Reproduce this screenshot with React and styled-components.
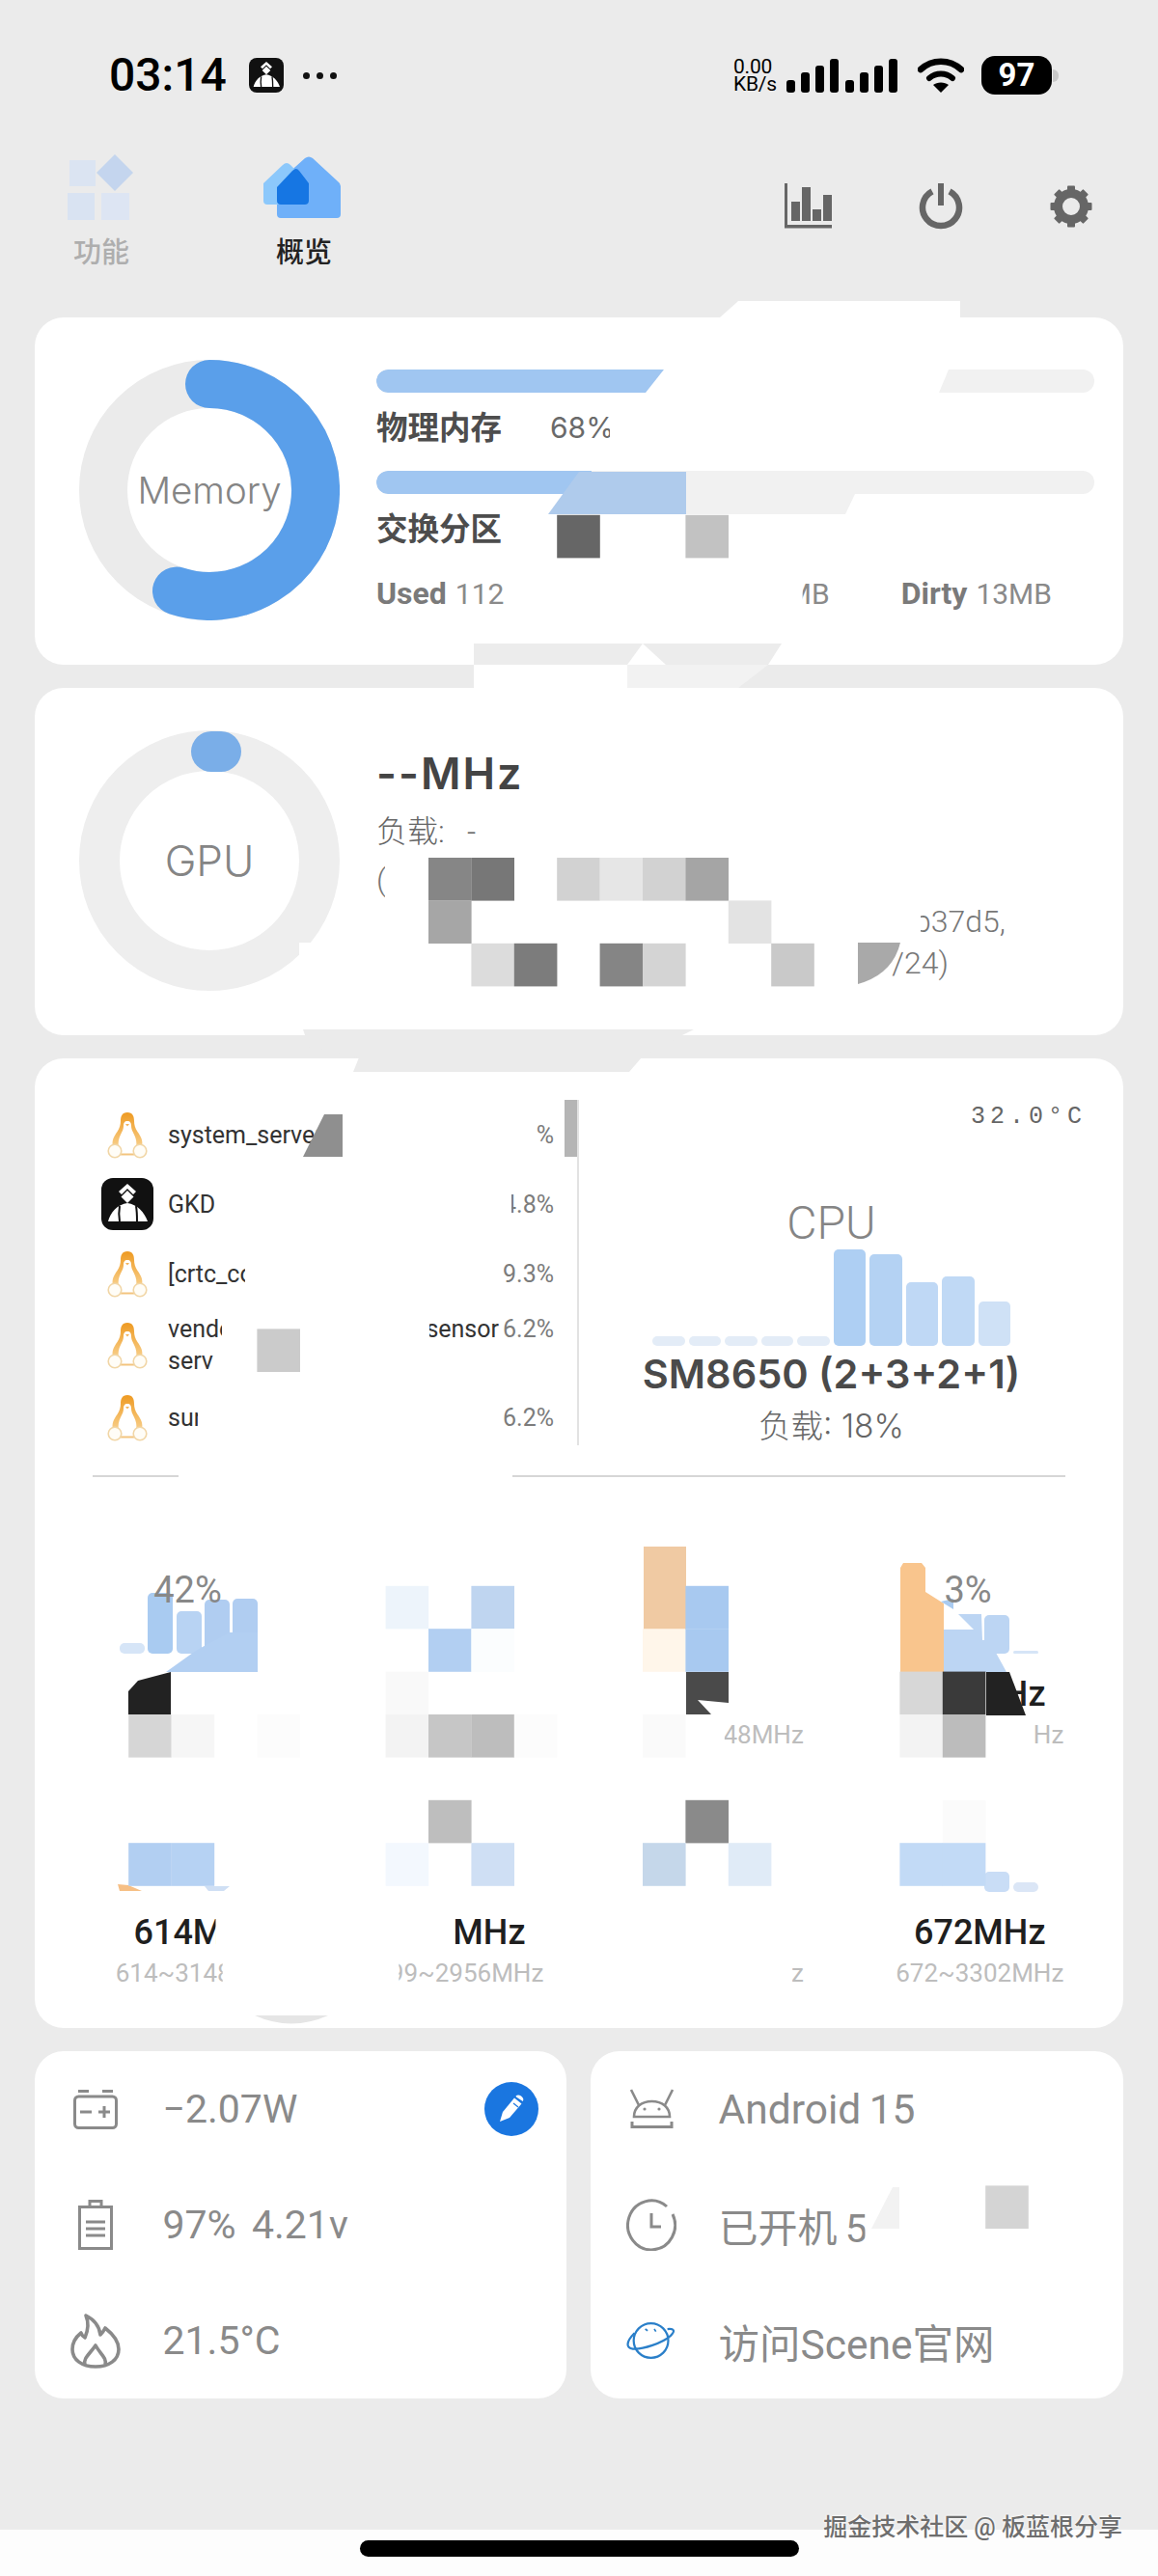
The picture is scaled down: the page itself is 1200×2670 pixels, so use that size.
import React from 'react';
import styled, { createGlobalStyle } from 'styled-components';

const Global = createGlobalStyle`
  html, body { margin: 0; padding: 0; background: #ebebeb; }
  * { box-sizing: border-box; }
  body { font-family: Roboto, "Noto Sans CJK SC", sans-serif; }
`;

const clip = (p) =>
  p.$keepLeft
    ? `clip-path: inset(-6px calc(100% - ${p.$keepLeft}px) -6px -2px);`
    : p.$keepRight
    ? `clip-path: inset(-6px -2px -6px calc(100% - ${p.$keepRight}px));`
    : '';

const Page = styled.div`
  position: relative;
  width: 1200px;
  height: 2670px;
  background: #ebebeb;
  display: flex;
  flex-direction: column;
  overflow: hidden;
`;

/* status bar */
const StatusBar = styled.div`
  height: 100px;
  padding: 56px 110px 0 113px;
  display: flex;
  align-items: center;
`;
const Clock = styled.div`
  font-size: 48px;
  line-height: 44px;
  font-weight: 500;
  color: #000;
  width: 145px;
`;
const MoreDots = styled.div`
  display: flex;
  gap: 7px;
  margin-left: 20px;
  & > i { width: 7px; height: 7px; border-radius: 50%; background: #111; display: block; }
`;
const StatusRight = styled.div`
  margin-left: auto;
  display: flex;
  align-items: center;
`;
const NetSpeed = styled.div`
  width: 55px;
  font-size: 21px;
  line-height: 18px;
  color: #000;
  letter-spacing: -0.2px;
`;
const BatteryPill = styled.div`
  position: relative;
  width: 73px;
  height: 40px;
  margin-left: 18px;
  border-radius: 14px;
  background: #000;
  color: #fff;
  font-size: 33px;
  font-weight: 700;
  line-height: 40px;
  text-align: center;
  &::after {
    content: '';
    position: absolute;
    right: -7px;
    top: 14px;
    width: 6px;
    height: 13px;
    border-radius: 0 6px 6px 0;
    background: #c8c8c8;
  }
`;

/* top tabs */
const TopBar = styled.div`
  display: flex;
  padding: 60px 68px 47px 55px;
  height: 229px;
`;
const Tab = styled.div`
  width: 100px;
  margin-right: 110px;
  display: flex;
  flex-direction: column;
  align-items: center;
`;
const TabLabel = styled.div`
  margin-top: 12px;
  font-size: 29px;
  line-height: 40px;
  font-weight: 500;
  color: ${(p) => (p.$active ? '#222' : '#aeaeae')};
`;
const Actions = styled.div`
  margin-left: auto;
  margin-top: 30px;
  display: flex;
  gap: 90px;
  align-items: flex-start;
`;

/* cards */
const Stack = styled.div`
  padding: 0 36px;
  display: flex;
  flex-direction: column;
  gap: 24px;
`;
const Card = styled.div`
  background: #fff;
  border-radius: 30px;
  height: ${(p) => p.$h}px;
`;
const GaugeCard = styled(Card)`
  display: flex;
  padding: 44px 30px 0 46px;
  gap: 38px;
`;
const Gauge = styled.div`
  position: relative;
  width: 270px;
  height: 270px;
  flex: none;
  display: flex;
  align-items: center;
  justify-content: center;
`;
const GaugeSvg = styled.svg`
  position: absolute;
  inset: 0;
`;
const GaugeLabel = styled.div`
  position: relative;
  font-family: Inter, sans-serif;
  font-size: ${(p) => p.$size}px;
  font-weight: 300;
  color: #858585;
`;
const Info = styled.div`
  flex: 1;
  padding-top: ${(p) => p.$top}px;
`;
const Track = styled.div`
  height: 24px;
  width: 744px;
  border-radius: 12px;
  background: #f1f1f1;
  overflow: hidden;
  margin-top: ${(p) => p.$mt || 0}px;
`;
const Fill = styled.div`
  height: 100%;
  background: #a0c6f1;
  border-radius: 12px 0 0 12px;
`;
const MemRow = styled.div`
  margin-top: 12px;
  height: 48px;
  display: flex;
  align-items: center;
  gap: 50px;
`;
const MemName = styled.div`
  font-size: 32.5px;
  font-weight: 700;
  color: #4d4d4d;
  margin-top: -6px;
`;
const MemPct = styled.div`
  display: inline-block;
  font-family: Inter, sans-serif;
  font-size: 30px;
  font-weight: 400;
  color: #6a6a6a;
  ${clip}
`;
const StatLine = styled.div`
  margin-top: 23px;
  width: 700px;
  height: 40px;
  display: flex;
  align-items: center;
  font-size: 30px;
  color: #8a8a8a;
`;
const Stat = styled.span`
  display: inline-block;
  white-space: nowrap;
  ${clip}
  & > b { font-size: 32px; font-weight: 700; color: #7a7a7a; margin-right: 9px; }
`;
const MidStat = styled.div`
  flex: 1;
  text-align: right;
  padding-right: 74px;
`;
const GpuTitle = styled.div`
  font-family: Inter, sans-serif;
  font-size: 45px;
  letter-spacing: 2px;
  line-height: 60px;
  font-weight: 600;
  color: #444;
`;
const GpuLoad = styled.div`
  margin-top: 8px;
  font-size: 32px;
  line-height: 44px;
  font-weight: 300;
  color: #666;
  white-space: pre;
`;
const GpuDesc = styled.div`
  margin-top: 7px;
  font-size: 32px;
  font-weight: 300;
  color: #777;
`;
const DescLine = styled.div`
  width: ${(p) => p.$w}px;
  height: 43px;
  line-height: 42px;
  text-align: right;
  overflow: hidden;
  white-space: nowrap;
`;
const DescFrag = styled.span`
  display: inline-block;
  ${clip}
`;

/* CPU card */
const CpuTop = styled.div`
  display: flex;
  padding: 43px 0 0 69px;
  height: 401px;
`;
const ProcList = styled.div`
  position: relative;
  width: 495px;
  height: 358px;
  padding-right: 26px;
  flex: none;
  &::before {
    content: '';
    position: absolute;
    left: 480px;
    top: 0;
    width: 13px;
    height: 59px;
    background: #b5b5b5;
  }
  &::after {
    content: '';
    position: absolute;
    left: 493px;
    top: 0;
    width: 2px;
    height: 358px;
    background: #e2e2e2;
  }
`;
const ProcRow = styled.div`
  height: ${(p) => p.$h}px;
  display: flex;
  align-items: center;
  width: 469px;
`;
const ProcIcon = styled.div`
  width: 54px;
  flex: none;
  margin-right: 15px;
  display: flex;
  justify-content: center;
`;
const ProcBody = styled.div`
  flex: 1;
  display: flex;
  flex-direction: column;
  gap: 1px;
`;
const ProcLine = styled.div`
  display: flex;
  align-items: center;
  height: 32px;
  font-size: 25px;
  white-space: nowrap;
`;
const ProcName = styled.span`
  display: inline-block;
  color: #333;
  ${clip}
`;
const ProcSpacer = styled.span`
  flex: 1;
`;
const ProcPct = styled.span`
  display: inline-block;
  color: #7c7c7c;
  margin-left: 4px;
  ${clip}
`;
const CpuPanel = styled.div`
  flex: 1;
  padding-right: 42px;
  padding-left: 1px;
  display: flex;
  flex-direction: column;
  align-items: center;
`;
const CpuTemp = styled.div`
  align-self: flex-end;
  font-family: "Liberation Mono", monospace;
  font-size: 25px;
  line-height: 36px;
  letter-spacing: 5px;
  margin-right: -4px;
  color: #666;
`;
const CpuLabel = styled.div`
  margin-top: 62px;
  font-size: 48px;
  line-height: 60px;
  font-weight: 300;
  color: #858585;
`;
const CpuBars = styled.div`
  margin-top: -3px;
  height: 100px;
  display: flex;
  align-items: flex-end;
  gap: 4px;
`;
const Bar = styled.div`
  width: ${(p) => p.$w}px;
  height: ${(p) => p.$h}px;
  background: ${(p) => p.$c};
  border-radius: 5px;
  flex: none;
`;
const Soc = styled.div`
  margin-top: 4px;
  font-family: Inter, "Noto Sans CJK SC", sans-serif;
  font-size: 41.5px;
  line-height: 50px;
  font-weight: 600;
  color: #4a4a4a;
  white-space: nowrap;
`;
const CpuLoad = styled.div`
  margin-top: 7px;
  font-family: Inter, "Noto Sans CJK SC", sans-serif;
  font-size: 33.5px;
  line-height: 44px;
  font-weight: 300;
  color: #666;
`;
const HRule = styled.div`
  height: 2px;
  margin: 31px 60px 0;
  background: #d6d6d6;
`;
const CoreGrid = styled.div`
  margin-top: 92px;
  padding: 0 14px 0 36px;
  display: grid;
  grid-template-columns: repeat(4, 269.5px);
  row-gap: 52px;
`;
const Core = styled.div`
  height: 195px;
  display: flex;
  flex-direction: column;
`;
const CorePct = styled.div`
  height: 50px;
  line-height: 50px;
  padding-right: 24.5px;
  text-align: center;
  font-size: 38px;
  color: #888;
  position: relative;
  z-index: 1;
`;
const CoreBars = styled.div`
  margin-top: -22px;
  height: 63px;
  padding-left: 52px;
  display: flex;
  align-items: flex-end;
  gap: 3.3px;
`;
const CoreFreq = styled.div`
  margin-top: 22px;
  height: 40px;
  line-height: 40px;
  text-align: center;
  font-size: 36px;
  font-weight: 500;
  color: #1f1f1f;
`;
const FreqText = styled.span`
  display: inline-block;
  ${clip}
`;
const CoreRange = styled.div`
  margin-top: 2px;
  height: 40px;
  line-height: 40px;
  text-align: center;
  font-size: 26px;
  color: #bdbdbd;
`;

/* bottom cards */
const BottomGrid = styled.div`
  display: grid;
  grid-template-columns: 551px 552px;
  gap: 25px;
`;
const InfoCard = styled(Card)`
  display: flex;
  flex-direction: column;
  justify-content: center;
`;
const InfoRow = styled.div`
  height: 120px;
  display: flex;
  align-items: center;
  padding-left: 37px;
`;
const InfoIcon = styled.div`
  width: 52px;
  flex: none;
  display: flex;
  justify-content: center;
  margin-right: 43.5px;
`;
const InfoText = styled.div`
  font-size: ${(p) => p.$size || 41}px;
  color: #8a8a8a;
  white-space: pre;
  word-spacing: -2px;
  ${clip}
`;
const EditButton = styled.div`
  margin-left: auto;
  margin-right: 29px;
  width: 56px;
  height: 56px;
  border-radius: 50%;
  background: #1a76e0;
  display: flex;
  align-items: center;
  justify-content: center;
`;

/* home bar + overlays */
const HomeBar = styled.div`
  margin-top: auto;
  height: 48px;
  background: #fdfdfd;
  display: flex;
  justify-content: center;
  padding-top: 11px;
`;
const HomePill = styled.div`
  width: 455px;
  height: 17px;
  border-radius: 9px;
  background: #000;
`;
const Watermark = styled.div`
  position: absolute;
  right: 37px;
  top: 2603px;
  font-size: 25px;
  line-height: 34px;
  font-weight: 500;
  color: #6e6e6e;
  text-shadow: 0 0 3px #fff, 0 0 2px #fff;
  white-space: nowrap;
`;
const RedactionLayer = styled.svg`
  position: absolute;
  left: 0;
  top: 0;
  pointer-events: none;
`;

/* icons */
const GkdGlyph = ({ size }) => (
  <svg width={size} height={size} viewBox="0 0 54 54">
    <rect width="54" height="54" rx="12" fill="#111" />
    <path d="M18 14 L27 6 L36 14 L33 17 L27 11 L21 17 Z" fill="#fff" />
    <path d="M27 13 L33.5 19.5 L27 26 L20.5 19.5 Z" fill="#fff" />
    <path d="M7 45 C9 36 17 27 27 26 C37 27 45 36 48 45 Z" fill="#fff" />
    <path d="M19 29 C18 35 18 40 19 45 M36 29 C37 35 37 40 37 45" stroke="#111" strokeWidth="2" fill="none" />
  </svg>
);
const Penguin = () => (
  <svg width="42" height="49" viewBox="0 0 42 49">
    <defs>
      <linearGradient id="tux" x1="0" y1="0" x2="0" y2="1">
        <stop offset="0" stopColor="#ee9a22" />
        <stop offset="1" stopColor="#f8cf8a" />
      </linearGradient>
    </defs>
    <path d="M21 1 C15.5 1 14 5 14 10 C14 14 13 17 10.5 21 C7 26 4.5 30 6 37 L36 37 C37.5 30 35 26 31.5 21 C29 17 28 14 28 10 C28 5 26.5 1 21 1Z" fill="url(#tux)" />
    <path d="M21 10 C24 10 25 12 25 15 C25 18 26 20 28 24 C30 28 31 32 30 37 L12 37 C11 32 12 28 14 24 C16 20 17 18 17 15 C17 12 18 10 21 10Z" fill="#fff" />
    <path d="M19 13 H23 L21 15.5Z" fill="#f2b257" />
    <path d="M14 44.5 H28" stroke="#f3c47e" strokeWidth="2" />
    <circle cx="8" cy="41" r="6.8" fill="#fffdf7" stroke="#f1d6a6" strokeWidth="1.6" />
    <circle cx="34" cy="41" r="6.8" fill="#fffdf7" stroke="#f1d6a6" strokeWidth="1.6" />
  </svg>
);
const Signal = () => {
  const hs = [13, 21, 28, 35];
  const xs = [0, 15, 30, 45, 61, 76, 91, 106];
  return (
    <svg width="115" height="36" viewBox="0 0 115 36">
      {xs.map((x, i) => {
        const h = hs[i % 4];
        return <rect key={x} x={x} y={36 - h} width="9" height={h} rx="3" fill="#000" />;
      })}
    </svg>
  );
};
const Wifi = () => (
  <svg width="48" height="36" viewBox="0 0 48 36" style={{ marginLeft: 21 }}>
    <path d="M3 12 C15 1 33 1 45 12" fill="none" stroke="#000" strokeWidth="6.5" strokeLinecap="round" />
    <path d="M12 21 C19 15 29 15 36 21" fill="none" stroke="#000" strokeWidth="6" strokeLinecap="round" />
    <path d="M24 36 L16 28 C20 24.5 28 24.5 32 28Z" fill="#000" />
  </svg>
);
const GridTabIcon = () => (
  <svg width="72" height="70" viewBox="0 0 72 70">
    <rect x="3" y="6" width="27" height="27" fill="#dbe4f2" />
    <rect x="1" y="40" width="28" height="28" fill="#d9e3f2" />
    <rect x="36" y="40" width="29" height="28" fill="#dde5f3" />
    <path d="M50 0 L69 19 L50 38 L31 19 Z" fill="#c4d5ee" />
  </svg>
);
const HomeTabIcon = () => (
  <svg width="90" height="70" viewBox="0 0 90 70">
    <path d="M17 62 Q17 66 21 66 H79 Q83 66 83 62 V33 Q83 30 80 28 L54 4 Q50 1 46 4 L17 30Z" fill="#6fb0f9" />
    <path d="M3 48 Q3 52 7 52 H46 Q50 52 50 48 V30 L31 11 Q27 7 23 11 L3 30Z" fill="#8cc8fb" />
    <path d="M17 48 Q17 52 21 52 H46 Q50 52 50 48 V30 L40 17 Q37 13 33 17 L17 34Z" fill="#1676e3" />
  </svg>
);
const ChartIcon = () => (
  <svg width="49" height="47" viewBox="0 0 49 47" fill="#666">
    <rect x="0" y="0" width="3" height="46" />
    <rect x="0" y="43" width="49" height="3.5" />
    <rect x="7" y="19" width="9" height="20" />
    <rect x="18" y="4" width="9" height="35" />
    <rect x="29" y="27" width="9" height="12" />
    <rect x="40" y="12" width="9" height="27" />
  </svg>
);
const PowerIcon = () => (
  <svg width="46" height="48" viewBox="0 0 46 48" fill="none" stroke="#666">
    <path d="M14 8.3 A19 19 0 1 0 32 8.3" strokeWidth="6.5" />
    <path d="M23 0 V23" strokeWidth="6" />
  </svg>
);
const GearIcon = () => {
  const angles = [0, 45, 90, 135, 180, 225, 270, 315];
  return (
    <svg width="44" height="44" viewBox="0 0 44 44" style={{ marginTop: 2 }}>
      <circle cx="22" cy="22" r="13.5" fill="none" stroke="#666" strokeWidth="9" />
      {angles.map((a) => (
        <rect key={a} x="18" y="0.5" width="8" height="8" rx="1" fill="#666" transform={`rotate(${a} 22 22)`} />
      ))}
    </svg>
  );
};
const CarBattery = () => (
  <svg width="46" height="41" viewBox="0 0 46 41" fill="none" stroke="#8a8a8a" strokeWidth="3">
    <path d="M5 1.5 H16 M30 1.5 H41" />
    <rect x="1.5" y="7" width="43" height="32.5" rx="4" />
    <path d="M7 23 H19 M26 23 H38 M32 17 V29" />
  </svg>
);
const TallBattery = () => (
  <svg width="36" height="52" viewBox="0 0 36 52" fill="none" stroke="#8a8a8a" strokeWidth="3">
    <path d="M12 7 V1.5 H24 V7" />
    <rect x="1.5" y="7.5" width="33" height="43" />
    <path d="M8 23 H28 M8 30 H28 M8 37 H28" />
  </svg>
);
const Flame = () => (
  <svg width="52" height="57" viewBox="0 0 52 57" fill="none" stroke="#8a8a8a" strokeWidth="3.6" strokeLinejoin="round">
    <path d="M16 2 C24 6 30 13 31 22 C33 20 35 17 36 15 C45 22 50 29 50 37 C50 48 40 55 26 55 C12 55 2 48 2 37 C2 30 6 24 11 20 C12 23 13 24 15 25 C18 18 19 9 16 2Z" />
    <path d="M15 53 C13 46 20 42 26 33 C31 42 38 46 36 53" />
  </svg>
);
const AndroidIcon = () => (
  <svg width="47" height="42" viewBox="0 0 47 42" fill="none" stroke="#8a8a8a" strokeWidth="2.6">
    <path d="M2 1 L10 17 M45 1 L37 17" />
    <path d="M5 29 C5 19 13 13 23.5 13 C34 13 42 19 42 29 Z" />
    <circle cx="16" cy="21" r="1.6" fill="#8a8a8a" stroke="none" />
    <circle cx="31" cy="21" r="1.6" fill="#8a8a8a" stroke="none" />
    <path d="M3 34 V39.5 H44 V34" strokeWidth="3" />
  </svg>
);
const ClockIcon = () => (
  <svg width="52" height="54" viewBox="0 0 52 54" fill="none" stroke="#8a8a8a" strokeWidth="3">
    <path d="M42 8 A24.5 25.5 0 1 0 48 16" />
    <path d="M26 15 V29 H36" />
  </svg>
);
const PlanetIcon = () => (
  <svg width="61" height="46" viewBox="0 0 61 46" fill="none" stroke="#2a7fc9" strokeWidth="2.6">
    <circle cx="30" cy="23" r="21" />
    <path d="M10 14 C0 24 -1 32 8 33 C20 34 44 26 54 17 C60 11 58 8 50 9" />
    <path d="M23 9 L26 11 M34 9 L36 12" strokeWidth="2" />
  </svg>
);
const PencilGlyph = () => (
  <svg width="36" height="36" viewBox="0 0 36 36">
    <path d="M6 31 L9 21 L21 6.5 L28.5 12.5 L16 27Z" fill="#fff" />
    <path d="M22.5 4.5 C24 3 26 3 28 4.5 C30 6 31 8 29.8 10 L23 5.5Z" fill="#fff" />
    <path d="M20 12 L25 16" stroke="#1a76e0" strokeWidth="1.2" />
  </svg>
);

/* data */
const procs = [
  { name: 'system_server', keep: 157, pct: '12.4%', keepPct: 18, h: 72 },
  { name: 'GKD', pct: '4.8%', keepPct: 44, h: 72, gkd: true },
  { name: '[crtc_commit]', keep: 80, pct: '9.3%', h: 72 },
  { h: 76, vendor: true },
  { name: 'surfaceflinger', keep: 31, pct: '6.2%', h: 74 },
];
const cpuBars = [
  [10, '#e3ecf7'], [10, '#e3ecf7'], [10, '#e3ecf7'], [10, '#e3ecf7'], [10, '#e3ecf7'],
  [100, '#aecff3'], [95, '#b4d2f3'], [66, '#bfd8f5'], [72, '#c0d9f5'], [46, '#cfe1f6'],
];
const cores = [
  { pct: '42%', bars: [[11, '#d6e5f7'], [63, '#a9cbf1'], [44, '#b8d3f3'], [56, '#b0cdf1'], [57, '#b0cdf1']] },
  {},
  { range: '499~3148MHz', keepRangeR: 82 },
  {
    pct: '3%',
    bars: [[0, 'none'], [0, 'none'], [0, 'none'], [40, '#bcd5f3'], [3, '#d6e5f7']],
    freq: '998MHz', keepFreqR: 33, range: '672~3302MHz', keepRangeR: 32,
  },
  { freq: '614MHz', keepFreqL: 85, range: '614~3148MHz', keepRangeL: 111 },
  { freq: '499MHz', keepFreqR: 73, range: '499~2956MHz', keepRangeR: 150 },
  { range: '499~3148MHz', keepRangeR: 12 },
  {
    bars: [[0, 'none'], [0, 'none'], [0, 'none'], [21, '#c9ddf6'], [10, '#dbe6f6']],
    freq: '672MHz', range: '672~3302MHz',
  },
];

const tiles = [
  [13, 12, '#666666'], [16, 12, '#c2c2c2'],
  [10, 20, '#868686'], [11, 20, '#777777'], [13, 20, '#d2d2d2'], [14, 20, '#e6e6e6'], [15, 20, '#d2d2d2'], [16, 20, '#a5a5a5'],
  [10, 21, '#a6a6a6'], [17, 21, '#e3e3e3'],
  [11, 22, '#dcdcdc'], [12, 22, '#7c7c7c'], [14, 22, '#858585'], [15, 22, '#d4d4d4'], [18, 22, '#c9c9c9'],
  [6, 31, '#cbcbcb'],
  [3, 40, '#d6d6d6'], [4, 40, '#f6f6f6'], [6, 40, '#fcfcfc'],
  [9, 37, '#edf4fb'], [11, 37, '#bfd5f0'], [10, 38, '#b2cff2'], [11, 38, '#fbfdfe'], [9, 39, '#f9f9f9'],
  [9, 40, '#f3f3f3'], [10, 40, '#c6c6c6'], [11, 40, '#bdbdbd'], [12, 40, '#fcfcfc'],
  [10, 42, '#bebebe'], [9, 43, '#f3f8fe'], [11, 43, '#cfdff4'],
  [3, 43, '#b2cff2'], [4, 43, '#b6d2f3'],
  [15, 38, '#fff6ea'], [16, 37, '#a8c9f0'], [16, 38, '#a8c9f0'], [15, 40, '#fafafa'],
  [16, 42, '#8a8a8a'], [15, 43, '#c5d7ea'], [17, 43, '#e0ebf7'],
  [21, 39, '#d7d7d7'], [22, 39, '#3a3a3a'], [21, 40, '#f3f3f3'], [22, 40, '#bcbcbc'],
  [22, 42, '#fbfbfb'], [21, 43, '#c2daf6'], [22, 43, '#c2daf6'],
  [23, 51, '#d4d4d4'],
];
const shapes = [
  /* white cover of the memory bar and card edge */
  ['#fff', '746,329 765,312 995,312 995,329 983,383 973,407 669,407 688,383'],
  /* memory bar 2 */
  ['#afcbec', '600,489 711,489 711,533 568,533'],
  ['#f1f1f1', '711,489 897,489 876,533 711,533'],
  /* between cards 1 and 2 */
  ['#ececec', '491,667 810,667 796,689 491,689'],
  ['#fff', '666,667 650,689 690,689'],
  ['#fff', '491,689 650,689 650,713 491,713'],
  ['#f2f2f2', '650,689 796,689 765,713 650,713'],
  /* GPU ring cover */
  ['#fff', '355,935 355,977 310,977 310,1020 298,1020 298,1060 320,1060 320,1067 355,1067'],
  /* between cards 2 and 3 */
  ['#ebebeb', '314,1067 719,1067 707,1073 665,1096 652,1111 366,1111 372,1096 320,1085'],
  /* process tile */
  ['#8f8f8f', '336,1155 355,1155 355,1199 314,1199'],
  /* rule break */
  ['#fff', '185,1524 531,1524 531,1534 185,1534'],
  /* core 1 */
  ['#b2cff2', '172,1733 200,1713 208,1708 238,1692 240,1692 267,1692 267,1733'],
  ['#222222', '133,1753 143,1742 158,1738 177,1733 177,1777 133,1777'],
  ['#f6bf85', '122,1953 133,1954 147,1960 124,1960'],
  ['#cfdff4', '212,1955 238,1955 232,1960 216,1960'],
  /* core 3 */
  ['#f0caa3', '667,1603 711,1603 711,1689 667,1689'],
  ['#4a4a4a', '711,1733 755,1733 755,1765 723,1762 737,1777 711,1777'],
  /* core 4 */
  ['#f9c58d', '933,1625 936,1620 955,1620 959,1625 959,1650 978,1662 978,1733 933,1733'],
  ['#bcd5f3', '978,1689 1009,1689 993,1673 1017,1673 1018,1700 1022,1700 1022,1713 1032,1713 1043,1733 978,1733'],
  ['#a9cbf1', '975,1660 988,1657 988,1668'],
  ['#222222', '1022,1733 1046,1733 1063,1778 1022,1778'],
  /* right info card */
  ['#f2f2f2', '925,2267 932,2267 932,2310 903,2310'],
];

const Gpu = () => (
  <Gauge>
    <GaugeSvg width="270" height="270" viewBox="0 0 270 270">
      <circle cx="135" cy="135" r="114" fill="none" stroke="#eeeeee" strokeWidth="42" />
      <path d="M137 22 H147" fill="none" stroke="#7aaee8" strokeWidth="42" strokeLinecap="round" />
    </GaugeSvg>
    <GaugeLabel $size={44}>GPU</GaugeLabel>
  </Gauge>
);
const Mem = () => (
  <Gauge>
    <GaugeSvg width="270" height="270" viewBox="0 0 270 270">
      <circle cx="135" cy="135" r="110" fill="none" stroke="#ebebeb" strokeWidth="50" />
      <path d="M135 25 A110 110 0 1 1 101 239.6" fill="none" stroke="#5a9fea" strokeWidth="50" strokeLinecap="round" />
    </GaugeSvg>
    <GaugeLabel $size={38.5}>Memory</GaugeLabel>
  </Gauge>
);

const ProcRows = () =>
  procs.map((p) =>
    p.vendor ? (
      <ProcRow key="vendor" $h={p.h}>
        <ProcIcon><Penguin /></ProcIcon>
        <ProcBody>
          <ProcLine>
            <ProcName $keepLeft={56}>vendor.qti</ProcName>
            <ProcSpacer />
            <ProcName $keepRight={72}>sensor</ProcName>
            <ProcPct>6.2%</ProcPct>
          </ProcLine>
          <ProcLine>
            <ProcName $keepLeft={47}>services</ProcName>
          </ProcLine>
        </ProcBody>
      </ProcRow>
    ) : (
      <ProcRow key={p.name} $h={p.h}>
        <ProcIcon>{p.gkd ? <GkdGlyph size={54} /> : <Penguin />}</ProcIcon>
        <ProcBody>
          <ProcLine>
            <ProcName $keepLeft={p.keep}>{p.name}</ProcName>
            <ProcSpacer />
            <ProcPct $keepRight={p.keepPct}>{p.pct}</ProcPct>
          </ProcLine>
        </ProcBody>
      </ProcRow>
    )
  );

export default function App() {
  return (
    <Page>
      <Global />
      <StatusBar>
        <Clock>03:14</Clock>
        <GkdGlyph size={36} />
        <MoreDots><i /><i /><i /></MoreDots>
        <StatusRight>
          <NetSpeed>0.00<br />KB/s</NetSpeed>
          <Signal />
          <Wifi />
          <BatteryPill>97</BatteryPill>
        </StatusRight>
      </StatusBar>

      <TopBar>
        <Tab>
          <GridTabIcon />
          <TabLabel>功能</TabLabel>
        </Tab>
        <Tab>
          <HomeTabIcon />
          <TabLabel $active>概览</TabLabel>
        </Tab>
        <Actions>
          <ChartIcon />
          <PowerIcon />
          <GearIcon />
        </Actions>
      </TopBar>

      <Stack>
        <GaugeCard $h={360}>
          <Mem />
          <Info $top={10}>
            <Track><Fill style={{ width: '68%' }} /></Track>
            <MemRow>
              <MemName>物理内存</MemName>
              <MemPct $keepLeft={62}>68%</MemPct>
            </MemRow>
            <Track $mt={21}><Fill style={{ width: '30%' }} /></Track>
            <MemRow>
              <MemName>交换分区</MemName>
            </MemRow>
            <StatLine>
              <Stat $keepLeft={132}><b>Used</b>11219MB</Stat>
              <MidStat><Stat $keepRight={28}><b>Cached</b>3211MB</Stat></MidStat>
              <Stat><b>Dirty</b>13MB</Stat>
            </StatLine>
          </Info>
        </GaugeCard>

        <GaugeCard $h={360}>
          <Gpu />
          <Info $top={15}>
            <GpuTitle>--MHz</GpuTitle>
            <GpuLoad>{'负载:   -'}</GpuLoad>
            <GpuDesc>
              <DescLine $w={9}>(</DescLine>
              <DescLine $w={652}><DescFrag $keepRight={88}>b37d5,</DescFrag></DescLine>
              <DescLine $w={593}>/24)</DescLine>
            </GpuDesc>
          </Info>
        </GaugeCard>

        <Card $h={1005}>
          <CpuTop>
            <ProcList><ProcRows /></ProcList>
            <CpuPanel>
              <CpuTemp>32.0°C</CpuTemp>
              <CpuLabel>CPU</CpuLabel>
              <CpuBars>
                {cpuBars.map(([h, c], i) => <Bar key={i} $w={33.5} $h={h} $c={c} />)}
              </CpuBars>
              <Soc>SM8650 (2+3+2+1)</Soc>
              <CpuLoad>负载: 18%</CpuLoad>
            </CpuPanel>
          </CpuTop>
          <HRule />
          <CoreGrid>
            {cores.map((c, i) => (
              <Core key={i}>
                <CorePct>{c.pct}</CorePct>
                <CoreBars>
                  {(c.bars || []).map(([h, col], k) => <Bar key={k} $w={26} $h={h} $c={col} />)}
                </CoreBars>
                <CoreFreq>
                  {c.freq && <FreqText $keepLeft={c.keepFreqL} $keepRight={c.keepFreqR}>{c.freq}</FreqText>}
                </CoreFreq>
                <CoreRange>
                  {c.range && <FreqText $keepLeft={c.keepRangeL} $keepRight={c.keepRangeR}>{c.range}</FreqText>}
                </CoreRange>
              </Core>
            ))}
          </CoreGrid>
        </Card>

        <BottomGrid>
          <InfoCard $h={360}>
            <InfoRow>
              <InfoIcon><CarBattery /></InfoIcon>
              <InfoText>−2.07W</InfoText>
              <EditButton><PencilGlyph /></EditButton>
            </InfoRow>
            <InfoRow>
              <InfoIcon><TallBattery /></InfoIcon>
              <InfoText>{'97%  4.21v'}</InfoText>
            </InfoRow>
            <InfoRow>
              <InfoIcon><Flame /></InfoIcon>
              <InfoText>21.5°C</InfoText>
            </InfoRow>
          </InfoCard>
          <InfoCard $h={360}>
            <InfoRow>
              <InfoIcon><AndroidIcon /></InfoIcon>
              <InfoText $size={42.5}>Android 15</InfoText>
            </InfoRow>
            <InfoRow>
              <InfoIcon><ClockIcon /></InfoIcon>
              <InfoText $size={41} $keepLeft={152}>已开机 5天</InfoText>
            </InfoRow>
            <InfoRow>
              <InfoIcon><PlanetIcon /></InfoIcon>
              <InfoText $size={42.5}>访问Scene官网</InfoText>
            </InfoRow>
          </InfoCard>
        </BottomGrid>
      </Stack>

      <HomeBar><HomePill /></HomeBar>
      <Watermark>掘金技术社区 @ 板蓝根分享</Watermark>

      <RedactionLayer width="1200" height="2670" viewBox="0 0 1200 2670">
        {shapes.map(([fill, points]) => <polygon key={points} points={points} fill={fill} />)}
        {tiles.map(([i, j, fill]) => (
          <rect key={`${i}-${j}`} x={44.4 * i} y={1 + 44.4 * j} width="44.6" height="44.6" fill={fill} />
        ))}
        <path d="M889 977 H933 Q925 1010 889 1020 Z" fill="#a9a9a9" />
        <path d="M264 2089 H340 Q302 2106 264 2089Z" fill="#e5e5e5" />
      </RedactionLayer>
    </Page>
  );
}
